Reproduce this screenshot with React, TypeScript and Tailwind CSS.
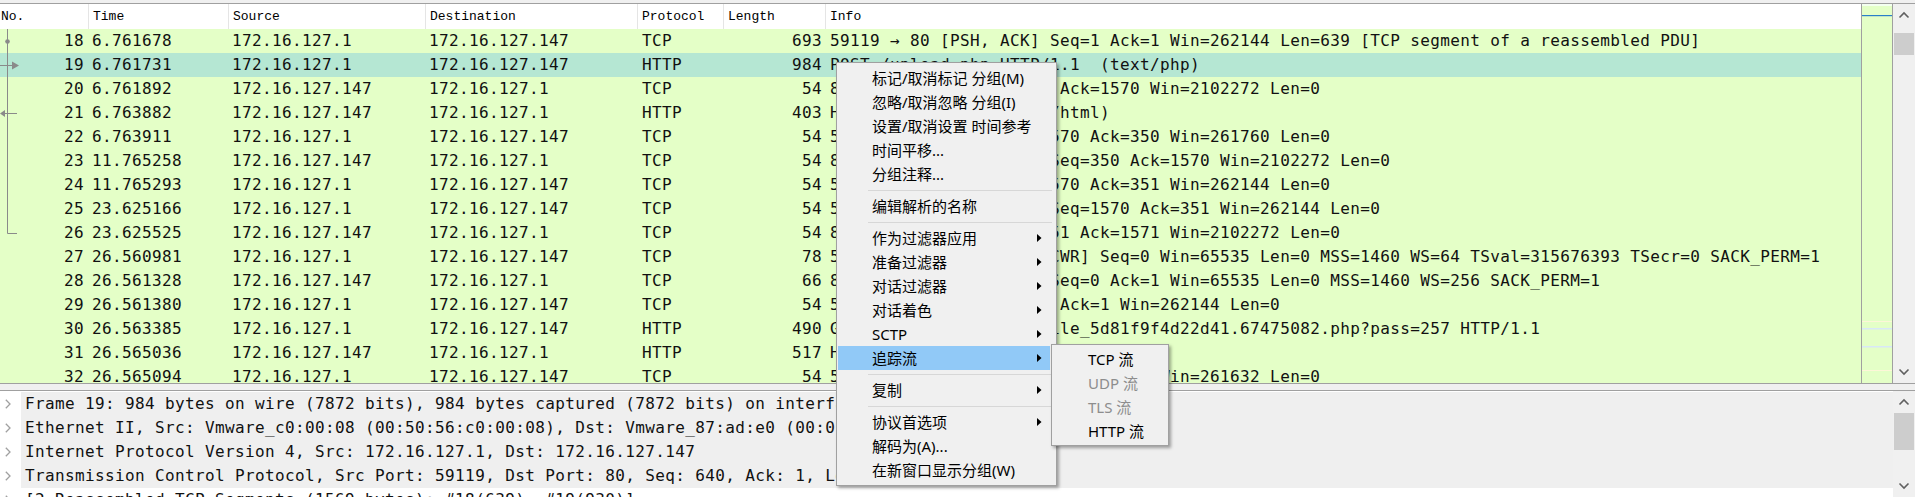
import React from 'react';

type Row = { no: number; t: string; s: string; d: string; p: string; l: number; i: string };

const ROWS: Row[] = [
  { no: 18, t: '6.761678', s: '172.16.127.1', d: '172.16.127.147', p: 'TCP', l: 693, i: '59119 → 80 [PSH, ACK] Seq=1 Ack=1 Win=262144 Len=639 [TCP segment of a reassembled PDU]' },
  { no: 19, t: '6.761731', s: '172.16.127.1', d: '172.16.127.147', p: 'HTTP', l: 984, i: 'POST /upload.php HTTP/1.1  (text/php)' },
  { no: 20, t: '6.761892', s: '172.16.127.147', d: '172.16.127.1', p: 'TCP', l: 54, i: '80 → 59119 [ACK] Seq=1 Ack=1570 Win=2102272 Len=0' },
  { no: 21, t: '6.763882', s: '172.16.127.147', d: '172.16.127.1', p: 'HTTP', l: 403, i: 'HTTP/1.1 200 OK  (text/html)' },
  { no: 22, t: '6.763911', s: '172.16.127.1', d: '172.16.127.147', p: 'TCP', l: 54, i: '59119 → 80 [ACK] Seq=1570 Ack=350 Win=261760 Len=0' },
  { no: 23, t: '11.765258', s: '172.16.127.147', d: '172.16.127.1', p: 'TCP', l: 54, i: '80 → 59119 [FIN, ACK] Seq=350 Ack=1570 Win=2102272 Len=0' },
  { no: 24, t: '11.765293', s: '172.16.127.1', d: '172.16.127.147', p: 'TCP', l: 54, i: '59119 → 80 [ACK] Seq=1570 Ack=351 Win=262144 Len=0' },
  { no: 25, t: '23.625166', s: '172.16.127.1', d: '172.16.127.147', p: 'TCP', l: 54, i: '59119 → 80 [FIN, ACK] Seq=1570 Ack=351 Win=262144 Len=0' },
  { no: 26, t: '23.625525', s: '172.16.127.147', d: '172.16.127.1', p: 'TCP', l: 54, i: '80 → 59119 [ACK] Seq=351 Ack=1571 Win=2102272 Len=0' },
  { no: 27, t: '26.560981', s: '172.16.127.1', d: '172.16.127.147', p: 'TCP', l: 78, i: '59120 → 80 [SYN, ECN, CWR] Seq=0 Win=65535 Len=0 MSS=1460 WS=64 TSval=315676393 TSecr=0 SACK_PERM=1' },
  { no: 28, t: '26.561328', s: '172.16.127.147', d: '172.16.127.1', p: 'TCP', l: 66, i: '80 → 59120 [SYN, ACK] Seq=0 Ack=1 Win=65535 Len=0 MSS=1460 WS=256 SACK_PERM=1' },
  { no: 29, t: '26.561380', s: '172.16.127.1', d: '172.16.127.147', p: 'TCP', l: 54, i: '59120 → 80 [ACK] Seq=1 Ack=1 Win=262144 Len=0' },
  { no: 30, t: '26.563385', s: '172.16.127.1', d: '172.16.127.147', p: 'HTTP', l: 490, i: 'GET /upload/tmpfiles/file_5d81f9f4d22d41.67475082.php?pass=257 HTTP/1.1' },
  { no: 31, t: '26.565036', s: '172.16.127.147', d: '172.16.127.1', p: 'HTTP', l: 517, i: 'HTTP/1.1 200 OK  (text/html)' },
  { no: 32, t: '26.565094', s: '172.16.127.1', d: '172.16.127.147', p: 'TCP', l: 54, i: '59120 → 80 [ACK] Seq=14673 Ack=1 Win=261632 Len=0' },
];

const DETAILS = [
  'Frame 19: 984 bytes on wire (7872 bits), 984 bytes captured (7872 bits) on interface 0',
  'Ethernet II, Src: Vmware_c0:00:08 (00:50:56:c0:00:08), Dst: Vmware_87:ad:e0 (00:0c:29:87:ad:e0)',
  'Internet Protocol Version 4, Src: 172.16.127.1, Dst: 172.16.127.147',
  'Transmission Control Protocol, Src Port: 59119, Dst Port: 80, Seq: 640, Ack: 1, Len: 930',
  '[2 Reassembled TCP Segments (1569 bytes): #18(639), #19(930)]',
];

type MI = { kind: 'item'; label: string; sub?: boolean; active?: boolean } | { kind: 'sep' };

const MENU: MI[] = [
  { kind: 'item', label: '标记/取消标记 分组(M)' },
  { kind: 'item', label: '忽略/取消忽略 分组(I)' },
  { kind: 'item', label: '设置/取消设置 时间参考' },
  { kind: 'item', label: '时间平移...' },
  { kind: 'item', label: '分组注释...' },
  { kind: 'sep' },
  { kind: 'item', label: '编辑解析的名称' },
  { kind: 'sep' },
  { kind: 'item', label: '作为过滤器应用', sub: true },
  { kind: 'item', label: '准备过滤器', sub: true },
  { kind: 'item', label: '对话过滤器', sub: true },
  { kind: 'item', label: '对话着色', sub: true },
  { kind: 'item', label: 'SCTP', sub: true },
  { kind: 'item', label: '追踪流', sub: true, active: true },
  { kind: 'sep' },
  { kind: 'item', label: '复制', sub: true },
  { kind: 'sep' },
  { kind: 'item', label: '协议首选项', sub: true },
  { kind: 'item', label: '解码为(A)...' },
  { kind: 'item', label: '在新窗口显示分组(W)' },
];

const SUB = [
  { label: 'TCP 流', disabled: false },
  { label: 'UDP 流', disabled: true },
  { label: 'TLS 流', disabled: true },
  { label: 'HTTP 流', disabled: false },
];

const mono = "font-['DejaVu_Sans_Mono','Liberation_Mono',monospace] text-[16px] tracking-[0.37px] leading-[24px] text-[#111]";
const uiFont = "font-['Noto_Sans','Noto_Sans_CJK_SC',sans-serif] text-[15px] leading-[24px]";

function ChevronUp() {
  return (
    <svg width="12" height="8" viewBox="0 0 12 8">
      <polyline points="1.5,6.5 6,2 10.5,6.5" fill="none" stroke="#606060" strokeWidth="1.6" />
    </svg>
  );
}
function ChevronDown() {
  return (
    <svg width="12" height="8" viewBox="0 0 12 8">
      <polyline points="1.5,1.5 6,6 10.5,1.5" fill="none" stroke="#606060" strokeWidth="1.6" />
    </svg>
  );
}

function Scrollbar({ thumbTop, thumbH }: { thumbTop: number; thumbH: number }) {
  return (
    <div className="w-[22px] bg-[#f0f0f0] flex flex-col shrink-0">
      <div className="h-[22px] flex items-center justify-center shrink-0">
        <ChevronUp />
      </div>
      <div className="flex-1 flex flex-col">
        <div style={{ height: thumbTop }} />
        <div className="mx-[1px] bg-[#cdcdcd]" style={{ height: thumbH }} />
      </div>
      <div className="h-[22px] flex items-center justify-center shrink-0">
        <ChevronDown />
      </div>
    </div>
  );
}

function Arrow() {
  return (
    <svg width="5" height="8" viewBox="0 0 5 8" className="absolute right-[8px] top-[8px]">
      <polygon points="0,0 4.5,4 0,8" fill="#000" />
    </svg>
  );
}

export default function App() {
  return (
    <div className="relative w-[1915px] h-[497px] overflow-hidden bg-white flex flex-col">
      <div className="h-[3px] bg-[#f0f0f0] shrink-0" />
      {/* packet list pane */}
      <div className="h-[381px] shrink-0 border-t border-b border-[#a0a0a0] flex">
        <div className="flex-1 flex flex-col overflow-hidden">
          <div className="h-[25px] shrink-0 flex bg-white font-['Liberation_Mono',monospace] text-[13px] text-black leading-[25px] whitespace-nowrap">
            <div className="w-[88px] pl-[1px]">No.</div>
            <div className="w-[140px] border-l border-[#e5e5e5] pl-[4px]">Time</div>
            <div className="w-[197px] border-l border-[#e5e5e5] pl-[4px]">Source</div>
            <div className="w-[212px] border-l border-[#e5e5e5] pl-[4px]">Destination</div>
            <div className="w-[86px] border-l border-[#e5e5e5] pl-[4px]">Protocol</div>
            <div className="w-[102px] border-l border-[#e5e5e5] pl-[4px]">Length</div>
            <div className="flex-1 border-l border-[#e5e5e5] pl-[4px]">Info</div>
          </div>
          <div className="relative flex-1 overflow-hidden">
            {ROWS.map((r) => (
              <div
                key={r.no}
                className={`h-[24px] flex whitespace-pre ${mono} ${r.no === 19 ? 'bg-[#b5e7d3]' : 'bg-[#e4ffc7]'}`}
              >
                <div className="w-[88px] shrink-0 text-right pr-[4px]">{r.no}</div>
                <div className="w-[140px] shrink-0 pl-[4px] overflow-hidden">{r.t}</div>
                <div className="w-[197px] shrink-0 pl-[4px] overflow-hidden">{r.s}</div>
                <div className="w-[212px] shrink-0 pl-[4px] overflow-hidden">{r.d}</div>
                <div className="w-[86px] shrink-0 pl-[5px] overflow-hidden">{r.p}</div>
                <div className="w-[102px] shrink-0 text-right pr-[3px]">{r.l}</div>
                <div className="flex-1 pl-[5px] overflow-hidden">{r.i}</div>
              </div>
            ))}
            <svg className="absolute left-0 top-0" width="22" height="240" viewBox="0 0 22 240">
              <g stroke="#8a8a8a" strokeWidth="1" fill="none">
                <line x1="7.5" y1="0" x2="7.5" y2="204.5" />
                <line x1="7.5" y1="204.5" x2="17" y2="204.5" />
                <line x1="0" y1="36.5" x2="12" y2="36.5" />
                <line x1="4" y1="84.5" x2="17" y2="84.5" />
              </g>
              <circle cx="7.5" cy="12.5" r="2.3" fill="#8a8a8a" />
              <polygon points="12,32.5 19,36.5 12,40.5" fill="#8a8a8a" />
              <polygon points="0,84.5 5,81 5,88" fill="#8a8a8a" />
            </svg>
          </div>
        </div>
        {/* minimap */}
        <div className="w-[32px] shrink-0 border-l border-r border-[#a0a0a0] bg-[#e4ffc7] relative">
          <svg className="absolute left-0 top-0" width="30" height="379" viewBox="0 0 30 379">
            <rect x="0" y="0" width="30" height="2" fill="#f4fff0" />
            <rect x="0" y="11" width="30" height="1.2" fill="#2a7fc9" />
            <rect x="0" y="317" width="30" height="1" fill="#fdf6d8" />
            <rect x="0" y="324" width="30" height="1.5" fill="#d8e8f8" />
            <rect x="0" y="342" width="30" height="1.5" fill="#d8e8f8" />
            <rect x="0" y="366" width="30" height="1" fill="#fdf6d8" />
          </svg>
        </div>
        <Scrollbar thumbTop={7} thumbH={22} />
      </div>
      {/* splitter */}
      <div className="h-[6px] shrink-0 bg-[#f0f0f0]" />
      {/* details pane */}
      <div className="flex-1 border-t border-[#a0a0a0] flex overflow-hidden">
        <div className="flex-1 flex flex-col pt-[1px] bg-white overflow-hidden">
          {DETAILS.map((d, idx) => (
            <div key={idx} className="h-[24px] shrink-0 flex whitespace-pre">
              <div className="w-[21px] shrink-0 flex items-center pl-[5px]">
                <svg width="6" height="10" viewBox="0 0 6 10">
                  <polyline points="0.8,0.8 5,5 0.8,9.2" fill="none" stroke="#a0a0a0" strokeWidth="1.3" />
                </svg>
              </div>
              <div className={`flex-1 pl-[4px] overflow-hidden ${mono} ${idx < 4 ? 'bg-[#efefef]' : 'bg-white'}`}>{d}</div>
            </div>
          ))}
        </div>
        <Scrollbar thumbTop={0} thumbH={37} />
      </div>

      {/* context menu */}
      <div className={`absolute left-[836px] top-[62px] w-[221px] bg-[#f0f0f0] border border-[#a0a0a0] shadow-[2px_2px_3px_rgba(0,0,0,0.35)] py-[3px] pl-[1px] pr-[6px] text-black ${uiFont}`}>
        {MENU.map((m, idx) =>
          m.kind === 'sep' ? (
            <div key={idx} className="h-[8px] flex items-center">
              <div className="ml-[30px] mr-[-2px] flex-1 h-[1px] bg-[#d7d7d7]" />
            </div>
          ) : (
            <div
              key={idx}
              className={`relative h-[24px] pl-[34px] whitespace-nowrap ${m.active ? 'bg-[#91c9f7]' : ''}`}
            >
              {m.label}
              {m.sub ? <Arrow /> : null}
            </div>
          )
        )}
      </div>

      {/* submenu */}
      <div className={`absolute left-[1051px] top-[344px] w-[118px] bg-[#f0f0f0] border border-[#a0a0a0] shadow-[2px_2px_3px_rgba(0,0,0,0.35)] py-[2px] ${uiFont}`}>
        {SUB.map((s) => (
          <div
            key={s.label}
            className={`h-[24px] pl-[36px] whitespace-nowrap ${s.disabled ? 'text-[#8d8d8d]' : 'text-black'}`}
          >
            {s.label}
          </div>
        ))}
      </div>
    </div>
  );
}
